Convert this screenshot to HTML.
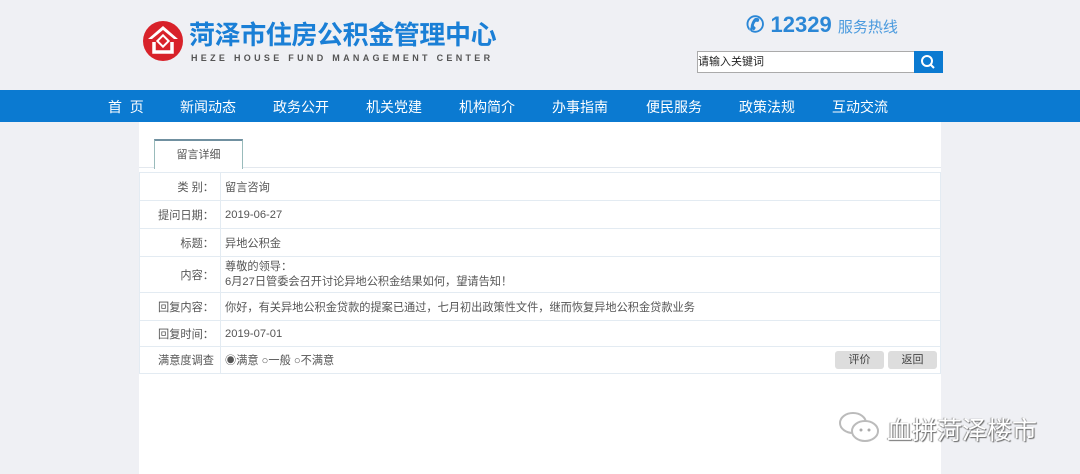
<!DOCTYPE html>
<html><head><meta charset="utf-8"><style>
*{margin:0;padding:0;box-sizing:border-box}
body{width:1080px;height:474px;background:#eff0f4;font-family:"Liberation Sans","Noto Sans CJK SC",sans-serif;position:relative;overflow:hidden;color:#333}
.abs{position:absolute}
.nav{top:90px;left:0;width:1080px;height:32px;background:#0b7ad1}
.nav span{position:absolute;top:7px;color:#fff;font-size:14px}
.main{top:122px;left:139px;width:802px;height:352px;background:#fff}
.tab{top:139px;left:154px;width:89px;height:30px;border:1px solid #9bb;border-bottom:none;border-top:2px solid #7090a0;font-size:11px;text-align:center;line-height:28px;color:#555;background:#fff}
.tabline{top:167px;left:139px;width:802px;height:1px;background:#e3e8ee}
table{position:absolute;top:172px;left:139px;width:802px;border-collapse:collapse;font-size:11.2px;color:#555}
td{border:1px solid #e3ebf2;padding:0 4px}
td.l{width:81px;text-align:right;padding-right:6px}
.btn{position:absolute;top:351px;height:18px;width:49px;background:#ddd;border-radius:3px;font-size:11px;text-align:center;line-height:18px;color:#444}
</style></head><body>
<svg class="abs" style="left:142px;top:20px" width="42" height="42" viewBox="0 0 42 42"><circle cx="21" cy="21" r="20" fill="#d8222a"/><path d="M21 6 L36 19 L32 19 L21 10 L10 19 L6 19Z" fill="#fff"/><path d="M12 22 L12 32 L30 32 L30 22" stroke="#fff" stroke-width="3.5" fill="none"/><rect x="16" y="16" width="10" height="10" fill="#fff" transform="rotate(45 21 21)"/><rect x="18" y="18" width="6" height="6" fill="#d8222a" transform="rotate(45 21 21)"/></svg>
<div class="abs" style="left:189px;top:20px;font-size:26px;line-height:30px;font-weight:bold;color:#1a7fd6;letter-spacing:-0.4px">菏泽市住房公积金管理中心</div>
<div class="abs" style="left:191px;top:53px;font-size:9px;font-weight:bold;color:#555;letter-spacing:3.3px">HEZE HOUSE FUND MANAGEMENT CENTER</div>
<div class="abs" style="left:746px;top:12px;font-size:22px;color:#2b87d6;font-weight:bold">✆ 12329 <span style="font-size:15px;font-weight:normal;color:#4a9ade">服务热线</span></div>
<div class="abs" style="left:697px;top:51px;width:218px;height:22px;border:1px solid #aaa;background:#fff;font-size:11px;line-height:20px;color:#222">请输入关键词</div>
<div class="abs" style="left:914px;top:51px;width:29px;height:22px;background:#0b7ad1"><svg width="29" height="22"><circle cx="13" cy="10" r="5" stroke="#fff" stroke-width="2" fill="none"/><line x1="17" y1="14" x2="20" y2="17" stroke="#fff" stroke-width="2"/></svg></div>
<div class="abs nav"><span style="left:108px">首&nbsp;&nbsp;页</span><span style="left:180px">新闻动态</span><span style="left:273px">政务公开</span><span style="left:366px">机关党建</span><span style="left:459px">机构简介</span><span style="left:552px">办事指南</span><span style="left:646px">便民服务</span><span style="left:739px">政策法规</span><span style="left:832px">互动交流</span></div>
<div class="abs main"></div>
<div class="abs tabline"></div>
<div class="abs tab">留言详细</div>
<table>
<tr style="height:28px"><td class="l">类 别：</td><td>留言咨询</td></tr>
<tr style="height:28px"><td class="l">提问日期：</td><td>2019-06-27</td></tr>
<tr style="height:28px"><td class="l">标题：</td><td>异地公积金</td></tr>
<tr style="height:36px"><td class="l">内容：</td><td style="line-height:15px">尊敬的领导：<br>6月27日管委会召开讨论异地公积金结果如何，望请告知！</td></tr>
<tr style="height:28px"><td class="l">回复内容：</td><td>你好，有关异地公积金贷款的提案已通过，七月初出政策性文件，继而恢复异地公积金贷款业务</td></tr>
<tr style="height:26px"><td class="l">回复时间：</td><td>2019-07-01</td></tr>
<tr style="height:27px"><td class="l">满意度调查</td><td>◉满意 ○一般 ○不满意</td></tr>
</table>
<div class="btn" style="left:835px">评价</div>
<div class="btn" style="left:888px">返回</div>
<svg class="abs" style="left:838px;top:410px" width="46" height="36" viewBox="0 0 46 36"><ellipse cx="15" cy="13" rx="13" ry="10" fill="none" stroke="#bbb" stroke-width="2"/><ellipse cx="27" cy="21" rx="13" ry="10" fill="#fff" stroke="#bbb" stroke-width="2"/><circle cx="23" cy="20" r="1.5" fill="#aaa"/><circle cx="31" cy="20" r="1.5" fill="#aaa"/></svg>
<div class="abs" style="left:887px;top:411px;font-size:25px;color:#fff;text-shadow:1px 1px 1px #666,-1px 0 1px #999">血拼菏泽楼市</div>
</body></html>
